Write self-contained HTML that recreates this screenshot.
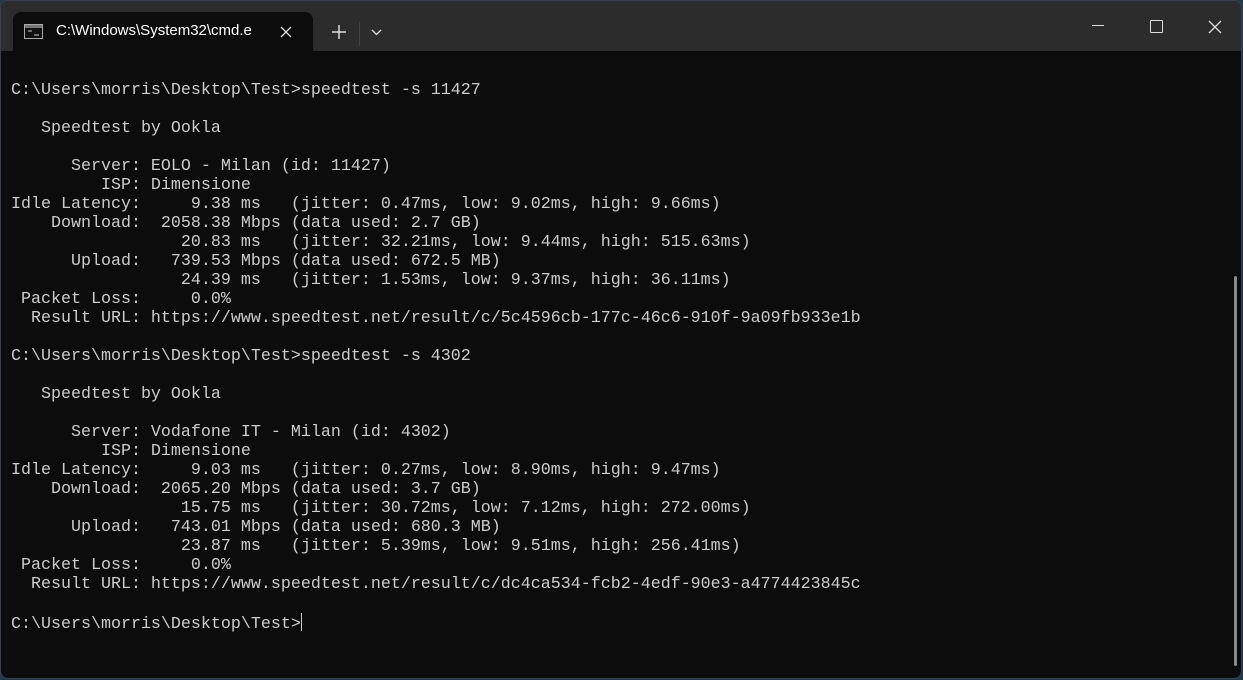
<!DOCTYPE html>
<html><head><style>
html,body{margin:0;padding:0;width:1243px;height:680px;overflow:hidden;background:#1f3b4a;}
.win{position:absolute;left:0;top:0;width:1242px;height:679px;background:#0c0c0c;border-radius:8px;overflow:hidden;border:1px solid #3a3f55;box-sizing:border-box}
.bar{position:absolute;left:0;top:0;width:100%;height:50px;background:#2c2c2c}
.tab{position:absolute;left:12px;top:11px;width:300px;height:39px;background:#0c0c0c;border-radius:8px 8px 0 0}
.tab .t{position:absolute;left:43px;top:10px;font:15px "Liberation Sans",sans-serif;color:#fff;width:216px;overflow:hidden;white-space:nowrap}
pre{position:absolute;left:10px;top:79.5px;margin:0;font:16.67px/19px "Liberation Mono",monospace;color:#cccccc}
.sb{position:absolute;left:1233px;top:275px;width:3px;height:390px;background:#8a8a8a;border-radius:2px}
.cur{display:inline-block;width:1px;height:18px;background:#ccc;vertical-align:-3px}
</style></head><body><div class="win">
<div class="bar">
<div class="tab">
<svg style="position:absolute;left:11px;top:12px" width="19" height="15"><rect x="0.5" y="0.5" width="18" height="14" fill="#111" stroke="#aaa"/><rect x="1" y="1" width="17" height="3" fill="#777"/><path d="M4 7h4M10 11h5" stroke="#ccc"/></svg>
<div class="t">C:\Windows\System32\cmd.e</div>
<svg style="position:absolute;left:267px;top:14px" width="12" height="12"><path d="M1 1L11 11M11 1L1 11" stroke="#ddd" stroke-width="1.3"/></svg>
</div>
<svg style="position:absolute;left:331px;top:24px" width="14" height="14"><path d="M7 0V14M0 7H14" stroke="#ddd" stroke-width="1.5"/></svg>
<div style="position:absolute;left:358px;top:21px;width:1px;height:24px;background:#444"></div>
<svg style="position:absolute;left:370px;top:28px" width="11" height="7"><path d="M1 1L5.5 5.5L10 1" stroke="#ddd" stroke-width="1.3" fill="none"/></svg>
<div style="position:absolute;left:1091px;top:24px;width:12px;height:1px;background:#ddd"></div>
<div style="position:absolute;left:1149px;top:19px;width:11px;height:11px;border:1px solid #ddd;border-radius:1px"></div>
<svg style="position:absolute;left:1207px;top:19px" width="14" height="14"><path d="M1 1L13 13M13 1L1 13" stroke="#ddd" stroke-width="1.3"/></svg>
</div>
<pre>C:\Users\morris\Desktop\Test&gt;speedtest -s 11427

   Speedtest by Ookla

      Server: EOLO - Milan (id: 11427)
         ISP: Dimensione
Idle Latency:     9.38 ms   (jitter: 0.47ms, low: 9.02ms, high: 9.66ms)
    Download:  2058.38 Mbps (data used: 2.7 GB)
                 20.83 ms   (jitter: 32.21ms, low: 9.44ms, high: 515.63ms)
      Upload:   739.53 Mbps (data used: 672.5 MB)
                 24.39 ms   (jitter: 1.53ms, low: 9.37ms, high: 36.11ms)
 Packet Loss:     0.0%
  Result URL: https://www.speedtest.net/result/c/5c4596cb-177c-46c6-910f-9a09fb933e1b

C:\Users\morris\Desktop\Test&gt;speedtest -s 4302

   Speedtest by Ookla

      Server: Vodafone IT - Milan (id: 4302)
         ISP: Dimensione
Idle Latency:     9.03 ms   (jitter: 0.27ms, low: 8.90ms, high: 9.47ms)
    Download:  2065.20 Mbps (data used: 3.7 GB)
                 15.75 ms   (jitter: 30.72ms, low: 7.12ms, high: 272.00ms)
      Upload:   743.01 Mbps (data used: 680.3 MB)
                 23.87 ms   (jitter: 5.39ms, low: 9.51ms, high: 256.41ms)
 Packet Loss:     0.0%
  Result URL: https://www.speedtest.net/result/c/dc4ca534-fcb2-4edf-90e3-a4774423845c

C:\Users\morris\Desktop\Test&gt;<span class="cur"></span></pre>
<div class="sb"></div>
</div></body></html>
